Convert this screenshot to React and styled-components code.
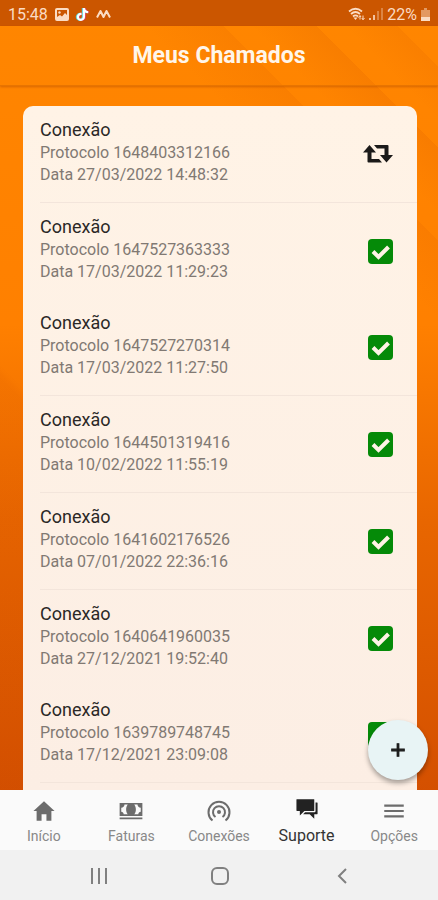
import React from 'react';
import styled, { createGlobalStyle } from 'styled-components';
import { FaTiktok } from 'react-icons/fa6';
import { IoMdAdd, IoMdCash, IoMdChatboxes, IoMdHome, IoMdMenu } from 'react-icons/io';

const GlobalStyle = createGlobalStyle`
  * {
    box-sizing: border-box;
  }

  body {
    margin: 0;
    font-family: Roboto, "Liberation Sans", sans-serif;
  }

  button {
    padding: 0;
    border: 0;
    background: none;
    color: inherit;
    font: inherit;
    cursor: pointer;
  }
`;

const Screen = styled.div`
  position: relative;
  display: flex;
  flex-direction: column;
  height: 100vh;
  overflow: hidden;
  background:
    linear-gradient(45deg, rgba(190, 60, 0, 0.08) 39%, transparent 40%),
    linear-gradient(45deg, transparent 76%, rgba(190, 60, 0, 0.08) 82%, transparent 82%),
    linear-gradient(45deg, transparent 84%, rgba(190, 60, 0, 0.1) 89%, transparent 89%),
    linear-gradient(45deg, transparent 91%, rgba(190, 60, 0, 0.08) 95%, transparent 95%),
    linear-gradient(#ff8600, #ff8000 36%, #e86600 58%, #d45000 88%);
`;

const StatusBar = styled.div`
  display: flex;
  align-items: center;
  justify-content: space-between;
  height: 26px;
  padding: 2px 8px 0;
  background: #cb5600;
  color: #fbdcc4;
  font-size: 16px;
`;

const StatusGroup = styled.div`
  display: flex;
  align-items: center;
  gap: ${props => props.$gap};
`;

const Header = styled.header`
  display: flex;
  align-items: center;
  justify-content: center;
  height: 60px;
  border-bottom: 1px solid #e87400;
  box-shadow: 0 1px 2px rgba(160, 60, 0, 0.4);
`;

const Title = styled.h1`
  margin: 0;
  color: #fff6ea;
  font-size: 23px;
  font-weight: 700;
`;

const Content = styled.main`
  display: flex;
  flex: 1;
  min-height: 0;
  padding: 20px 21px 0 23px;
  overflow: hidden;
`;

const Tickets = styled.ul`
  flex: 1;
  margin: 0;
  padding: 0 0 0 17px;
  border-radius: 10px 10px 0 0;
  background: linear-gradient(#fff3e6, #fceee4);
  list-style: none;
`;

const Ticket = styled.li`
  display: flex;
  align-items: flex-start;
  justify-content: space-between;
  height: ${props => (props.$divided ? '97px' : '96px')};
  padding: 12px 24px 0 0;
  border-bottom: ${props => (props.$divided ? '1px solid #f3e5db' : '0')};
`;

const Subject = styled.h2`
  margin: 0;
  color: #2b2826;
  font-size: 18px;
  font-weight: 400;
  line-height: 24px;
`;

const Detail = styled.p`
  margin: 0;
  color: #817973;
  font-size: 16px;
  line-height: 22px;
`;

const Status = styled.span`
  display: flex;
  align-items: center;
  height: 72px;
`;

const AddButton = styled.button`
  position: absolute;
  right: 10px;
  bottom: 120px;
  display: flex;
  align-items: center;
  justify-content: center;
  width: 60px;
  height: 60px;
  border-radius: 50%;
  background: #e8f4f5;
  box-shadow: 0 3px 5px rgba(0, 0, 0, 0.35);
  color: #151515;
  font-size: 20px;

  svg {
    stroke: currentColor;
    stroke-width: 28px;
  }
`;

const TabBar = styled.nav`
  display: grid;
  grid-template-columns: repeat(5, 1fr);
  height: 60px;
  background: #fafafa;
`;

const Tab = styled.button`
  display: flex;
  flex-direction: column;
  align-items: center;
  justify-content: flex-end;
  gap: ${props => (props.$active ? '4px' : '2px')};
  padding-bottom: 4px;
  color: ${props => (props.$active ? '#222' : '#6c6c6c')};

  svg {
    width: 26px;
    height: 26px;
  }
`;

const TabLabel = styled.span`
  color: ${props => (props.$active ? '#333' : '#888')};
  font-size: ${props => (props.$active ? '16px' : '14px')};
  line-height: 20px;
`;

const SystemBar = styled.div`
  display: grid;
  grid-template-columns: repeat(3, 1fr);
  align-items: center;
  height: 50px;
  padding: 2px 35px 0 38px;
  background: #f1f1f1;
  color: #808080;
`;

const SystemButton = styled.button`
  display: flex;
  justify-content: center;
`;

const TikTok = styled(FaTiktok)`
  color: #fff;
  filter: drop-shadow(-1px 0 0 #5ad6d8) drop-shadow(1px 0 0 #d8405a);
`;

const PictureIcon = () => (
  <svg width="14" height="13" viewBox="0 0 14 13">
    <rect x="1" y="1" width="12" height="11" rx="1" fill="none" stroke="currentColor" strokeWidth="2" />
    <circle cx="4.5" cy="4.5" r="1.2" fill="currentColor" />
    <path d="M2 11V9l3-2 2 1.500L10 5l3 3v3z" fill="currentColor" />
  </svg>
);

const ZigzagIcon = () => (
  <svg width="15" height="10" viewBox="0 0 15 10">
    <path d="M1 8.500 4.500 2 7.500 8 10.500 2 14 8.500" fill="none" stroke="currentColor" strokeWidth="2" strokeLinejoin="round" />
  </svg>
);

const WifiIcon = () => (
  <svg width="17" height="14" viewBox="0 0 17 14">
    <g fill="none" stroke="currentColor" strokeWidth="1.8">
      <path d="M1 4.500Q7.500-.9 14 4.500" />
      <path d="M3 7Q7.500 3 12 7" />
      <path d="M5 9.500Q7.500 7.200 10 9.500" />
    </g>
    <path d="m7.500 13-2-2.500h4z" fill="currentColor" />
    <path d="M12 12.500V9m-1.500 1.500L12 8.500l1 1.500M15 8.500v4M13.800 11l1.200 1.800 1.500-1.800" fill="none" stroke="currentColor" />
  </svg>
);

const SignalIcon = () => (
  <svg width="14" height="12" viewBox="0 0 14 12" fill="currentColor">
    <path d="M0 10h2v2H0zM4 7h2v5H4z" opacity=".8" />
    <path d="M8 3h2v9H8zM12 0h2v12h-2z" opacity=".35" />
  </svg>
);

const BatteryIcon = () => (
  <svg width="9" height="13" viewBox="0 0 9 13" fill="currentColor">
    <path d="M3 0h3v2h3v11H0V2h3z" opacity=".5" />
    <path d="M0 9h9v4H0z" />
  </svg>
);

const DoneIcon = () => (
  <svg width="25" height="25" viewBox="0 0 25 25" role="img" aria-label="Concluído">
    <rect width="25" height="25" rx="4" fill="#058a08" />
    <path d="M5 12.500 10.500 18 20.500 8" fill="none" stroke="#fff3e6" strokeWidth="4" />
  </svg>
);

const PendingIcon = () => (
  <svg width="30" height="20" viewBox="0 0 30 20" role="img" aria-label="Em andamento">
    <g fill="#1b1a19">
      <path d="M6.500 1 13 8.500H8.500V15H16l3 3.500H5.500a1 1 0 0 1-1-1v-9H0z" />
      <path d="M23.500 18.500 17 11h4.500V4.500H14L11 1h13.500a1 1 0 0 1 1 1v9H30z" />
    </g>
  </svg>
);

const ConnectionIcon = () => (
  <svg viewBox="0 0 26 26" fill="none" stroke="currentColor" strokeWidth="2">
    <circle cx="13" cy="14" r="2" fill="currentColor" stroke="none" />
    <path d="M9.500 19A6 6 0 1 1 16.500 19" />
    <path d="M6.500 22.500A10.500 10.500 0 1 1 19.500 22.500" />
  </svg>
);

const tickets = [
  { protocol: '1648403312166', date: '27/03/2022 14:48:32', divided: true, done: false },
  { protocol: '1647527363333', date: '17/03/2022 11:29:23', divided: false, done: true },
  { protocol: '1647527270314', date: '17/03/2022 11:27:50', divided: true, done: true },
  { protocol: '1644501319416', date: '10/02/2022 11:55:19', divided: true, done: true },
  { protocol: '1641602176526', date: '07/01/2022 22:36:16', divided: true, done: true },
  { protocol: '1640641960035', date: '27/12/2021 19:52:40', divided: false, done: true },
  { protocol: '1639789748745', date: '17/12/2021 23:09:08', divided: true, done: true }
];

const tabs = [
  { label: 'Início', Icon: IoMdHome },
  { label: 'Faturas', Icon: IoMdCash },
  { label: 'Conexões', Icon: ConnectionIcon },
  { label: 'Suporte', Icon: IoMdChatboxes, active: true },
  { label: 'Opções', Icon: IoMdMenu }
];

const App = () => (
  <Screen>
    <GlobalStyle />
    <StatusBar>
      <StatusGroup $gap="7px">
        <span>15:48</span>
        <PictureIcon />
        <TikTok size={13} />
        <ZigzagIcon />
      </StatusGroup>
      <StatusGroup $gap="4px">
        <WifiIcon />
        <SignalIcon />
        <span>22%</span>
        <BatteryIcon />
      </StatusGroup>
    </StatusBar>
    <Header>
      <Title>Meus Chamados</Title>
    </Header>
    <Content>
      <Tickets>
        {
          tickets.map(ticket =>
            <Ticket key={ticket.protocol} $divided={ticket.divided}>
              <div>
                <Subject>Conexão</Subject>
                <Detail>Protocolo {ticket.protocol}</Detail>
                <Detail>Data {ticket.date}</Detail>
              </div>
              <Status>
                {ticket.done ? <DoneIcon /> : <PendingIcon />}
              </Status>
            </Ticket>
          )
        }
      </Tickets>
    </Content>
    <AddButton aria-label="Adicionar"><IoMdAdd /></AddButton>
    <TabBar>
      {
        tabs.map(({ label, Icon, active }) =>
          <Tab key={label} $active={active}>
            <Icon />
            <TabLabel $active={active}>{label}</TabLabel>
          </Tab>
        )
      }
    </TabBar>
    <SystemBar>
      <SystemButton aria-label="Recentes">
        <svg width="16" height="16" viewBox="0 0 16 16">
          <path d="M1 0v16M8 0v16M15 0v16" stroke="currentColor" strokeWidth="2" />
        </svg>
      </SystemButton>
      <SystemButton aria-label="Tela inicial">
        <svg width="18" height="18" viewBox="0 0 18 18">
          <rect x="1" y="1" width="16" height="16" rx="5" fill="none" stroke="currentColor" strokeWidth="2" />
        </svg>
      </SystemButton>
      <SystemButton aria-label="Voltar">
        <svg width="10" height="16" viewBox="0 0 10 16">
          <path d="M9 1 2 8l7 7" fill="none" stroke="currentColor" strokeWidth="2" />
        </svg>
      </SystemButton>
    </SystemBar>
  </Screen>
);

export default App;
